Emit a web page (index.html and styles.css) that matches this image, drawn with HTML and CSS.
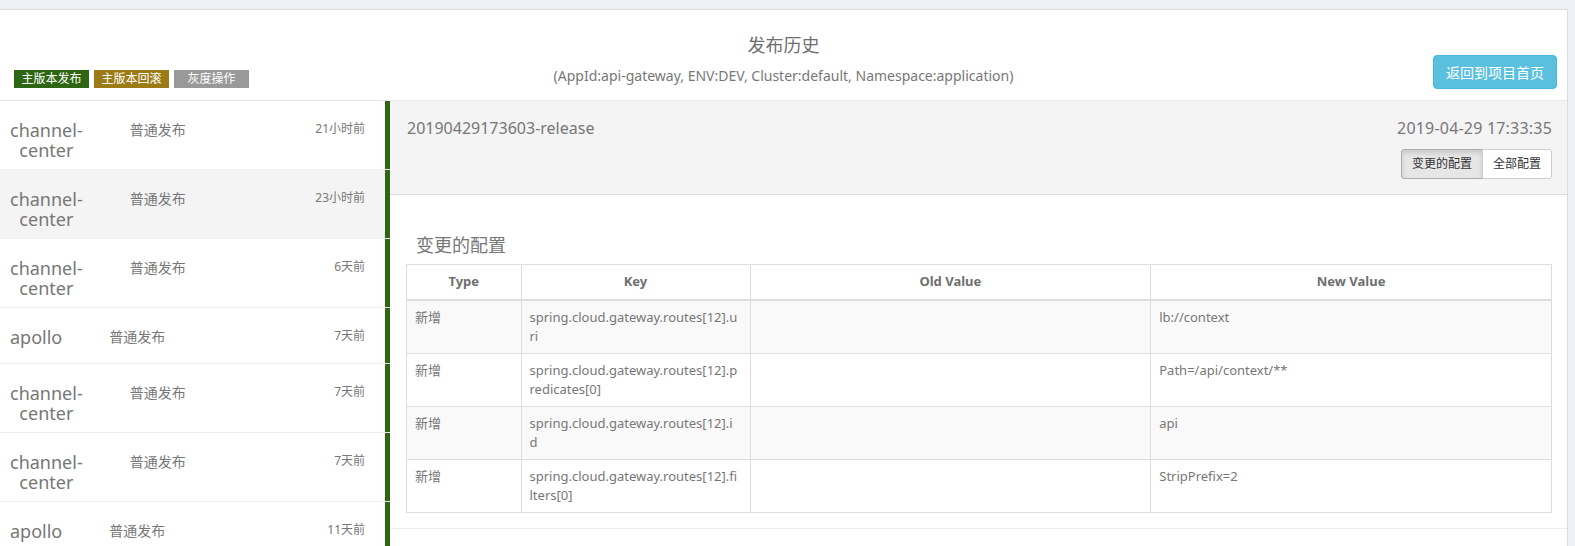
FILE: index.html
```html
<!DOCTYPE html>
<html lang="zh-CN">
<head>
<meta charset="utf-8">
<title>发布历史</title>
<link rel="stylesheet" href="styles.css">
</head>
<body>
<div class="page">
  <div class="panel">
    <header class="top">
      <div class="legend">
        <span class="label label-main">主版本发布</span>
        <span class="label label-rollback">主版本回滚</span>
        <span class="label label-gray">灰度操作</span>
      </div>
      <div class="title-block">
        <div class="title">发布历史</div>
        <div class="subtitle">(AppId:api-gateway, ENV:DEV, Cluster:default, Namespace:application)</div>
      </div>
      <div class="top-actions">
        <button class="btn-info">返回到项目首页</button>
      </div>
    </header>
    <div class="main">
      <div class="history">
        <div class="item">
          <div class="name">channel-center</div>
          <div class="type">普通发布</div>
          <div class="time">21小时前</div>
        </div>
        <div class="item active">
          <div class="name">channel-center</div>
          <div class="type">普通发布</div>
          <div class="time">23小时前</div>
        </div>
        <div class="item">
          <div class="name">channel-center</div>
          <div class="type">普通发布</div>
          <div class="time">6天前</div>
        </div>
        <div class="item">
          <div class="name">apollo</div>
          <div class="type">普通发布</div>
          <div class="time">7天前</div>
        </div>
        <div class="item">
          <div class="name">channel-center</div>
          <div class="type">普通发布</div>
          <div class="time">7天前</div>
        </div>
        <div class="item">
          <div class="name">channel-center</div>
          <div class="type">普通发布</div>
          <div class="time">7天前</div>
        </div>
        <div class="item">
          <div class="name">apollo</div>
          <div class="type">普通发布</div>
          <div class="time">11天前</div>
        </div>
      </div>
      <div class="detail">
        <div class="detail-head">
          <div class="head-row">
            <span class="release-name">20190429173603-release</span>
            <span class="release-time">2019-04-29 17:33:35</span>
          </div>
          <div class="head-actions">
            <div class="btn-group">
              <button class="btn-sm active">变更的配置</button>
              <button class="btn-sm">全部配置</button>
            </div>
          </div>
        </div>
        <div class="detail-body">
          <h4 class="section-title">变更的配置</h4>
          <table class="config-table">
            <colgroup>
              <col class="c-type"><col class="c-key"><col class="c-old"><col class="c-new">
            </colgroup>
            <thead>
              <tr><th>Type</th><th>Key</th><th>Old Value</th><th>New Value</th></tr>
            </thead>
            <tbody>
              <tr><td>新增</td><td class="key">spring.cloud.gateway.routes[12].u<br>ri</td><td></td><td>lb://context</td></tr>
              <tr><td>新增</td><td class="key">spring.cloud.gateway.routes[12].p<br>redicates[0]</td><td></td><td>Path=/api/context/**</td></tr>
              <tr><td>新增</td><td class="key">spring.cloud.gateway.routes[12].i<br>d</td><td></td><td>api</td></tr>
              <tr><td>新增</td><td class="key">spring.cloud.gateway.routes[12].fi<br>lters[0]</td><td></td><td>StripPrefix=2</td></tr>
            </tbody>
          </table>
        </div>
      </div>
    </div>
  </div>
</div>
</body>
</html>
```
FILE: styles.css
```css
* { box-sizing: border-box; }
html, body { margin: 0; padding: 0; height: 100%; }
body {
  background: #eff0f5;
  font-family: "Noto Sans", "Noto Sans CJK SC", sans-serif;
  color: #777;
  overflow: hidden;
}
.page {
  padding: 9px 7px 0 0;
  height: 100%;
}
.panel {
  background: #fff;
  border-top: 1px solid #dcdcdc;
  border-right: 1px solid #dcdcdc;
  height: 100%;
  display: flex;
  flex-direction: column;
}
.top {
  height: 91px;
  flex: none;
  border-bottom: 1px solid #e8e8e8;
  display: grid;
  grid-template-columns: 1fr auto 1fr;
}
.legend {
  align-self: end;
  padding: 0 0 12px 14px;
  display: flex;
  gap: 5px;
}
.label {
  display: inline-block;
  width: 75px;
  height: 18px;
  line-height: 18px;
  text-align: center;
  font-size: 12px;
  color: #fff;
}
.label-main { background: #2f6613; }
.label-rollback { background: #9c7b17; }
.label-gray { background: #999; }
.title-block {
  text-align: center;
  padding-top: 25px;
}
.title {
  font-size: 18px;
  line-height: 20px;
  color: #6f6f6f;
}
.subtitle {
  margin-top: 11px;
  font-size: 14px;
  line-height: 20px;
}
.top-actions {
  align-self: end;
  justify-self: end;
  padding: 0 10px 11px 0;
}
.btn-info {
  font-family: inherit;
  height: 34px;
  padding: 0 12px;
  font-size: 14px;
  color: #fff;
  background: #5bc0de;
  border: 1px solid #46b8da;
  border-radius: 4px;
}
.main {
  flex: 1;
  display: flex;
  align-items: flex-start;
  min-height: 0;
}
.history {
  width: 390px;
  flex: none;
  display: flex;
  flex-direction: column;
  gap: 1px;
  background: #eceef2;
}
.item {
  flex: none;
  display: flex;
  align-items: flex-start;
  min-height: 55px;
  padding: 19px 20px 9px 10px;
  background: #fff;
  border-right: 5px solid #2f6613;
}
.item.active { background: #f4f4f4; }
.name {
  width: min-content;
  text-align: center;
  font-size: 18px;
  line-height: 20px;
}
.type {
  margin-left: 47px;
  font-size: 14px;
  line-height: 20px;
}
.time {
  margin-left: auto;
  font-size: 12px;
  line-height: 18px;
}
.detail {
  flex: 1;
  min-width: 0;
}
.detail-head {
  background: #f4f4f4;
  border-bottom: 1px solid #dedede;
  padding: 16px 15px 15px 17px;
}
.head-row {
  display: flex;
  justify-content: space-between;
  font-size: 16px;
  line-height: 22px;
}
.release-time { letter-spacing: 0.2px; }
.head-actions {
  display: flex;
  justify-content: flex-end;
  margin-top: 10px;
}
.btn-group { display: flex; }
.btn-sm {
  font-family: inherit;
  font-size: 12px;
  line-height: 18px;
  padding: 5px 10px;
  color: #333;
  background: #fff;
  border: 1px solid #ccc;
}
.btn-sm:first-child { border-radius: 3px 0 0 3px; }
.btn-sm:last-child { border-radius: 0 3px 3px 0; margin-left: -1px; }
.btn-sm.active {
  background: #e6e6e6;
  border-color: #adadad;
  box-shadow: inset 0 3px 5px rgba(0,0,0,.125);
}
.detail-body {
  padding: 40px 15px 15px 16px;
  border-bottom: 1px solid #eee;
}
.section-title {
  margin: 0 0 9px;
  padding-left: 10px;
  font-weight: normal;
  font-size: 18px;
  line-height: 20px;
}
.config-table {
  width: 100%;
  border-collapse: collapse;
  table-layout: fixed;
  font-size: 13px;
  line-height: 19px;
}
.c-type { width: 10%; }
.c-key { width: 20%; }
.c-old { width: 35%; }
.c-new { width: 35%; }
.config-table th,
.config-table td {
  border: 1px solid #ddd;
  padding: 7px 8px;
  vertical-align: top;
  text-align: left;
}
.config-table th {
  padding: 7px 8px 8px;
  text-align: center;
  font-weight: bold;
  color: #6f6f6f;
  border-bottom-width: 2px;
}
.config-table tbody tr:nth-child(odd) { background: #f9f9f9; }
.config-table td.key { word-break: break-all; }
```
